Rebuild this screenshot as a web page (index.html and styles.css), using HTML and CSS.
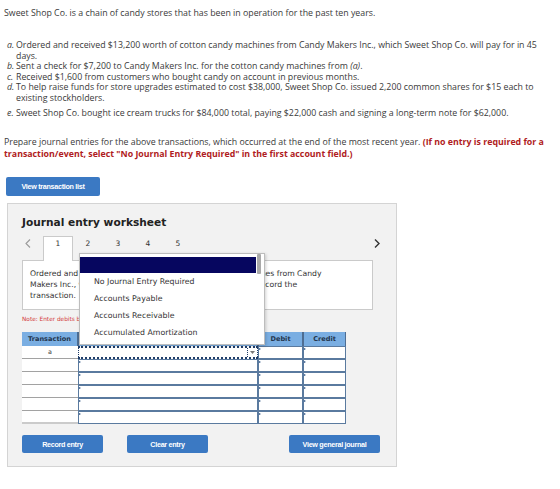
FILE: index.html
```html
<!DOCTYPE html>
<html lang="en">
<head>
<meta charset="utf-8">
<title>Journal entry worksheet</title>
<link rel="stylesheet" href="styles.css">
</head>
<body>
<main class="page">
  <p class="intro">Sweet Shop Co. is a chain of candy stores that has been in operation for the past ten years.</p>

  <ol class="events">
    <li><span class="tag">a.</span><span>Ordered and received $13,200 worth of cotton candy machines from Candy Makers Inc., which Sweet Shop Co. will pay for in 45 days.</span></li>
    <li><span class="tag">b.</span><span>Sent a check for $7,200 to Candy Makers Inc. for the cotton candy machines from <em>(a)</em>.</span></li>
    <li><span class="tag">c.</span><span>Received $1,600 from customers who bought candy on account in previous months.</span></li>
    <li><span class="tag">d.</span><span>To help raise funds for store upgrades estimated to cost $38,000, Sweet Shop Co. issued 2,200 common shares for $15 each to existing stockholders.</span></li>
    <li class="gap"><span class="tag">e.</span><span>Sweet Shop Co. bought ice cream trucks for $84,000 total, paying $22,000 cash and signing a long-term note for $62,000.</span></li>
  </ol>

  <p class="prompt">Prepare journal entries for the above transactions, which occurred at the end of the most recent year. <strong class="warn">(If no entry is required for a transaction/event, select "No Journal Entry Required" in the first account field.)</strong></p>

  <button class="btn btn-list" type="button">View transaction list</button>

  <section class="worksheet">
    <h2 class="ws-title">Journal entry worksheet</h2>

    <div class="tabs">
      <span class="nav prev">
        <svg width="6" height="9" viewBox="0 0 6 9"><polyline points="5,0.5 1,4.5 5,8.5" fill="none" stroke="#9a9a9a" stroke-width="1.1"/></svg>
      </span>
      <span class="tab active">1</span>
      <span class="tab">2</span>
      <span class="tab">3</span>
      <span class="tab">4</span>
      <span class="tab">5</span>
      <span class="nav next">
        <svg width="6" height="9" viewBox="0 0 6 9"><polyline points="1,0.5 5,4.5 1,8.5" fill="none" stroke="#333" stroke-width="1.4"/></svg>
      </span>
    </div>

    <div class="desc">Ordered and received $13,200 worth of cotton candy machines from Candy Makers Inc., which Sweet Shop Co. will pay for in 45 days. Record the transaction.</div>

    <p class="note">Note: Enter debits before credits.</p>

    <table class="entry">
      <colgroup>
        <col class="c-trans"><col class="c-acct"><col class="c-debit"><col class="c-credit">
      </colgroup>
      <thead>
        <tr>
          <th class="h-trans">Transaction</th>
          <th class="h-col">General Journal</th>
          <th class="h-col">Debit</th>
          <th class="h-col">Credit</th>
        </tr>
      </thead>
      <tbody>
        <tr>
          <td class="trans">a</td>
          <td class="inp"><div class="field focus"><span class="drop"><svg width="5" height="3" viewBox="0 0 5 3"><polygon points="0,0 5,0 2.5,3" fill="#777"/></svg></span></div></td>
          <td class="inp"><div class="field"></div></td>
          <td class="inp"><div class="field"></div></td>
        </tr>
        <tr>
          <td class="trans"></td>
          <td class="inp"><div class="field"></div></td>
          <td class="inp"><div class="field"></div></td>
          <td class="inp"><div class="field"></div></td>
        </tr>
        <tr>
          <td class="trans"></td>
          <td class="inp"><div class="field"></div></td>
          <td class="inp"><div class="field"></div></td>
          <td class="inp"><div class="field"></div></td>
        </tr>
        <tr>
          <td class="trans"></td>
          <td class="inp"><div class="field"></div></td>
          <td class="inp"><div class="field"></div></td>
          <td class="inp"><div class="field"></div></td>
        </tr>
        <tr>
          <td class="trans"></td>
          <td class="inp"><div class="field"></div></td>
          <td class="inp"><div class="field"></div></td>
          <td class="inp"><div class="field"></div></td>
        </tr>
        <tr class="last">
          <td class="trans"></td>
          <td class="inp"><div class="field"></div></td>
          <td class="inp"><div class="field"></div></td>
          <td class="inp"><div class="field"></div></td>
        </tr>
      </tbody>
    </table>

    <div class="actions">
      <button class="btn btn-act" type="button">Record entry</button>
      <button class="btn btn-act btn-clear" type="button">Clear entry</button>
      <button class="btn btn-act btn-journal" type="button">View general journal</button>
    </div>

    <!-- open account list of the focused select -->
    <div class="picker">
      <ul class="opts">
        <li class="opt sel"></li>
        <li class="opt">No Journal Entry Required</li>
        <li class="opt">Accounts Payable</li>
        <li class="opt">Accounts Receivable</li>
        <li class="opt">Accumulated Amortization</li>
      </ul>
      <div class="scroll"><span class="thumb"></span></div>
    </div>
  </section>
</main>
</body>
</html>
```

FILE: styles.css
```css
* { box-sizing: border-box; }

body {
  margin: 0;
  background: #fff;
  color: #3a3a3a;
  font-family: "Open Sans", "Liberation Sans", sans-serif;
  font-size: 8.8px;
}

.page {
  padding: 8px 12px 0 4px;
}

.intro {
  margin: 0;
  line-height: 11px;
}

.events {
  list-style: none;
  margin: 21px 0 0;
  padding: 0 0 0 3px;
  line-height: 10.6px;
}
.events li { display: flex; }
.events li.gap { margin-top: 4px; }
.events .tag {
  flex: 0 0 9px;
  font-style: italic;
}

.prompt {
  margin: 18px 0 0;
  line-height: 12px;
}
.warn {
  color: #b01c22;
  font-weight: 700;
}

/* blue action buttons */
.btn {
  display: flex;
  align-items: center;
  justify-content: center;
  height: 18px;
  padding: 0;
  border: 0;
  border-radius: 2px;
  background: #3b79c3;
  color: #fff;
  font-family: "Liberation Sans", Arial, sans-serif;
  font-weight: 700;
  font-size: 7.2px;
  letter-spacing: -0.3px;
}
.btn-list {
  width: 94px;
  height: 19px;
  margin: 17px 0 0 2px;
}

/* worksheet panel */
.worksheet {
  position: relative;
  width: 390px;
  margin: 7px 0 0 3px;
  padding: 11px 14px 13px;
  border: 1px solid #d4d4d4;
  background: #f2f2f2;
  font-family: "DejaVu Sans", Verdana, sans-serif;
  color: #333;
}

.ws-title {
  margin: 0;
  font-size: 10.6px;
  line-height: 14px;
  font-weight: 700;
  color: #222;
}

.tabs {
  display: flex;
  align-items: flex-start;
  height: 24px;
  margin-top: 7px;
}
.nav {
  display: flex;
  align-items: center;
  height: 14px;
}
.prev { width: 21px; padding-left: 3px; }
.next { margin-left: auto; margin-right: 2px; }
.tab {
  width: 30px;
  height: 24px;
  padding-top: 3px;
  text-align: center;
  font-size: 7.5px;
  line-height: 9px;
}
.tab.active {
  position: relative;
  z-index: 1;
  height: 25px;
  background: #fff;
  border: 1px solid #cacaca;
  border-bottom: 0;
  padding-top: 2px;
}

.desc {
  width: 351px;
  height: 50px;
  padding: 7px 42px 6px 7px;
  background: #fff;
  border: 1px solid #cacaca;
  font-size: 7.7px;
  line-height: 11px;
}

.note {
  margin: 5px 0 0;
  font-size: 5.8px;
  line-height: 8px;
  color: #d23a3a;
}

/* journal entry grid */
.entry {
  margin-top: 9px;
  border-collapse: separate;
  border-spacing: 0;
  table-layout: fixed;
  width: 324px;
}
.c-trans { width: 56px; }
.c-acct { width: 180px; }
.c-debit { width: 45px; }
.c-credit { width: 43px; }

.entry th {
  height: 14px;
  padding: 0;
  background: #7aaee2;
  font-size: 6.6px;
  font-weight: 700;
  color: #23354d;
}
.entry .h-trans { border-right: 1px solid #4e6d92; }
.entry .h-col {
  border-left: 1px solid #4e6d92;
  border-right: 1px solid #4e6d92;
}

.entry td { padding: 0; }
.entry .trans {
  height: 13px;
  background: #fff;
  border-bottom: 1px solid #a2a2a2;
  text-align: center;
  font-size: 6.4px;
  color: #444;
}
.entry tr.last .trans { border-bottom: 2px solid #cbcbcb; }

.field {
  position: relative;
  height: 13px;
  background: #fff;
  border: 1px solid #5a7a9f;
}
.field::before {
  content: "";
  position: absolute;
  left: 0;
  top: 1px;
  border-left: 2px solid #2d5384;
  border-top: 1.5px solid transparent;
  border-bottom: 1.5px solid transparent;
}
.field.focus {
  border: 1px dotted #1f3d69;
  border-top-width: 2px;
  border-bottom-width: 2px;
}
.field.focus::before { display: none; }
.drop {
  position: absolute;
  right: 0;
  top: 0;
  bottom: 0;
  width: 10px;
  display: flex;
  align-items: center;
  justify-content: center;
  border-left: 1px dotted #1f3d69;
}

.actions {
  display: flex;
  margin-top: 11px;
}
.btn-act { width: 81px; }
.btn-clear { margin-left: 24px; }
.btn-journal {
  width: 91px;
  margin-left: auto;
  margin-right: 2px;
}

/* dropdown list overlaying the grid */
.picker {
  position: absolute;
  left: 71px;
  top: 49px;
  z-index: 2;
  display: flex;
  width: 186px;
  height: 92px;
  background: #fff;
  border: 1px solid #bdbdbd;
  box-shadow: 1px 1px 3px rgba(0, 0, 0, 0.18);
}
.opts {
  flex: 1;
  margin: 0;
  padding: 3px 0 0;
  list-style: none;
}
.opt {
  height: 17px;
  padding-left: 14px;
  line-height: 17px;
  font-size: 7.8px;
  color: #333;
  white-space: nowrap;
}
.opt.sel {
  height: 16px;
  background: #06065f;
}
.scroll {
  width: 8px;
  padding: 0 2px 0 1px;
}
.thumb {
  display: block;
  width: 4px;
  height: 20px;
  background: #a9a9a9;
  border-radius: 1px;
}
```
